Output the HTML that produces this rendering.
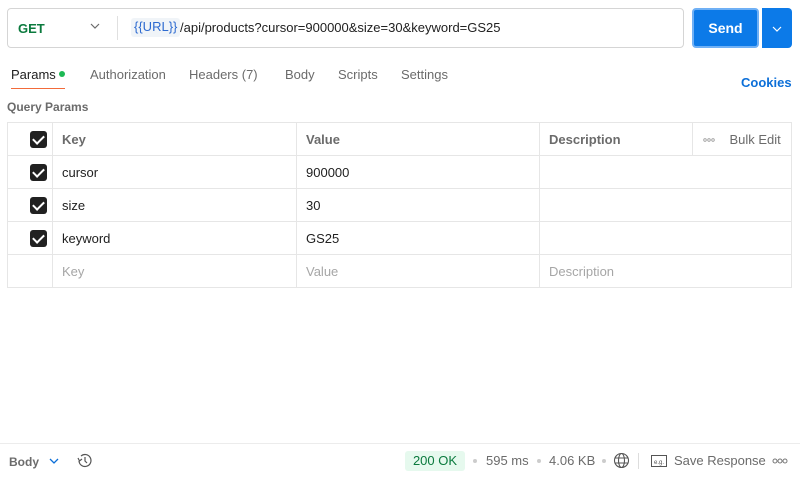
<!DOCTYPE html>
<html><head><style>
*{box-sizing:border-box;margin:0;padding:0}
body{width:800px;height:479px;background:#fff;font-family:"Liberation Sans",sans-serif;font-size:13px;color:#212121;position:relative;overflow:hidden}
.a{position:absolute}
.url{left:7px;top:8px;width:677px;height:40px;border:1px solid #d5d5d5;border-radius:4px}
.tab{top:67px;font-size:13px;color:#6b6b6b}
table{position:absolute;left:7px;top:122px;width:785px;border-collapse:collapse}
td{border:1px solid #e6e6e6;height:33px;padding-left:9px;font-size:13px}
th{border:1px solid #e6e6e6;height:33px;text-align:left;padding-left:9px;font-weight:bold;color:#6b6b6b;font-size:13px}
.cb{width:17px;height:17px;background:#212121;border-radius:3px;display:inline-block;position:relative;vertical-align:middle}
.cb:after{content:"";position:absolute;left:5px;top:2px;width:5px;height:9px;border:solid #fff;border-width:0 2px 2px 0;transform:rotate(45deg)}
.ph{color:#a6a6a6}
.f{top:453px;font-size:13px;color:#6b6b6b}
.dot{width:4px;height:4px;border-radius:2px;background:#ccc;top:459px}
</style></head><body>
<div class="a url"></div>
<div class="a" style="left:18px;top:21px;font-weight:bold;color:#0b7a3e;font-size:13px">GET</div>
<svg class="a" style="left:90px;top:23px" width="10" height="6"><path d="M1 1l4 4 4-4" fill="none" stroke="#6b6b6b" stroke-width="1.2"/></svg>
<div class="a" style="left:117px;top:16px;width:1px;height:24px;background:#e0e0e0"></div>
<div class="a" style="left:131px;top:18px;height:19px;padding:1px 3px;background:#f0f4f8;border-radius:3px;color:#2e6bd0;font-size:13px">{{URL}}</div>
<div class="a" style="left:180px;top:20px;font-size:13px;color:#212121">/api/products?cursor=900000&amp;size=30&amp;keyword=GS25</div>
<div class="a" style="left:692px;top:8px;width:67px;height:40px;background:#0c7ae8;border:2px solid #6fb0f5;border-radius:4px;color:#fff;font-weight:bold;font-size:14px;text-align:center;line-height:36px">Send</div>
<div class="a" style="left:762px;top:8px;width:30px;height:40px;background:#0c7ae8;border-radius:0 4px 4px 0"></div>
<svg class="a" style="left:772px;top:26px" width="10" height="6"><path d="M1 1l4 4 4-4" fill="none" stroke="#fff" stroke-width="1.2"/></svg>
<div class="a tab" style="left:11px;color:#212121">Params</div>
<div class="a" style="left:59px;top:71px;width:6px;height:6px;border-radius:3px;background:#1db954"></div>
<div class="a" style="left:11px;top:88px;width:54px;height:1px;background:#f26b3a"></div>
<div class="a tab" style="left:90px">Authorization</div>
<div class="a tab" style="left:189px">Headers (7)</div>
<div class="a tab" style="left:285px">Body</div>
<div class="a tab" style="left:338px">Scripts</div>
<div class="a tab" style="left:401px">Settings</div>
<div class="a" style="left:741px;top:75px;font-weight:bold;color:#0c6fd8;font-size:13px">Cookies</div>
<div class="a" style="left:7px;top:100px;font-weight:bold;color:#6b6b6b;font-size:12px">Query Params</div>
<table>
<tr><th style="width:45px;padding-left:22px"><span class="cb"></span></th><th style="width:244px">Key</th><th style="width:243px">Value</th><th style="width:153px">Description</th><th style="font-weight:normal;padding-left:10px"><svg width="12" height="4" style="vertical-align:middle"><circle cx="2" cy="2" r="1.3" fill="none" stroke="#999" stroke-width=".8"/><circle cx="6" cy="2" r="1.3" fill="none" stroke="#999" stroke-width=".8"/><circle cx="10" cy="2" r="1.3" fill="none" stroke="#999" stroke-width=".8"/></svg>&nbsp;&nbsp;&nbsp; Bulk Edit</th></tr>
<tr><td style="padding-left:22px"><span class="cb"></span></td><td>cursor</td><td>900000</td><td colspan="2"></td></tr>
<tr><td style="padding-left:22px"><span class="cb"></span></td><td>size</td><td>30</td><td colspan="2"></td></tr>
<tr><td style="padding-left:22px"><span class="cb"></span></td><td>keyword</td><td>GS25</td><td colspan="2"></td></tr>
<tr><td></td><td class="ph">Key</td><td class="ph">Value</td><td class="ph" colspan="2">Description</td></tr>
</table>
<div class="a" style="left:0;top:443px;width:800px;height:1px;background:#ececec"></div>
<div class="a f" style="left:9px;font-weight:bold;font-size:12px;top:455px">Body</div>
<svg class="a" style="left:49px;top:458px" width="10" height="6"><path d="M1 1l4 4 4-4" fill="none" stroke="#0c6fd8" stroke-width="1.3"/></svg>
<svg class="a" style="left:76px;top:452px" width="17" height="17" viewBox="0 0 17 17"><path d="M3 9a6 6 0 1 0 2-5" fill="none" stroke="#555" stroke-width="1.2"/><path d="M2 6l1.5 3 2.5-2" fill="none" stroke="#555" stroke-width="1.2"/><path d="M9 5v4l2 2" fill="none" stroke="#555" stroke-width="1.2"/></svg>
<div class="a" style="left:405px;top:451px;width:60px;height:20px;background:#e6f9ee;border-radius:3px;color:#0b7a3e;text-align:center;line-height:20px;font-size:13px">200 OK</div>
<div class="a dot" style="left:473px"></div>
<div class="a f" style="left:486px">595 ms</div>
<div class="a dot" style="left:537px"></div>
<div class="a f" style="left:549px">4.06 KB</div>
<div class="a dot" style="left:602px"></div>
<svg class="a" style="left:613px;top:452px" width="17" height="17" viewBox="0 0 17 17"><circle cx="8.5" cy="8.5" r="7" fill="none" stroke="#555" stroke-width="1.1"/><ellipse cx="8.5" cy="8.5" rx="3" ry="7" fill="none" stroke="#555" stroke-width="1.1"/><path d="M1.5 6h14M1.5 11h14" stroke="#555" stroke-width="1.1"/></svg>
<div class="a" style="left:638px;top:453px;width:1px;height:16px;background:#ddd"></div>
<svg class="a" style="left:651px;top:455px" width="16" height="12"><rect x=".5" y=".5" width="15" height="11" fill="none" stroke="#555"/><text x="3" y="9" font-size="6" fill="#555" font-family="Liberation Sans">e.g.</text></svg>
<div class="a f" style="left:674px">Save Response</div>
<svg class="a" style="left:772px;top:458px" width="16" height="6"><circle cx="3" cy="3" r="2" fill="none" stroke="#777"/><circle cx="8" cy="3" r="2" fill="none" stroke="#777"/><circle cx="13" cy="3" r="2" fill="none" stroke="#777"/></svg>
</body></html>
